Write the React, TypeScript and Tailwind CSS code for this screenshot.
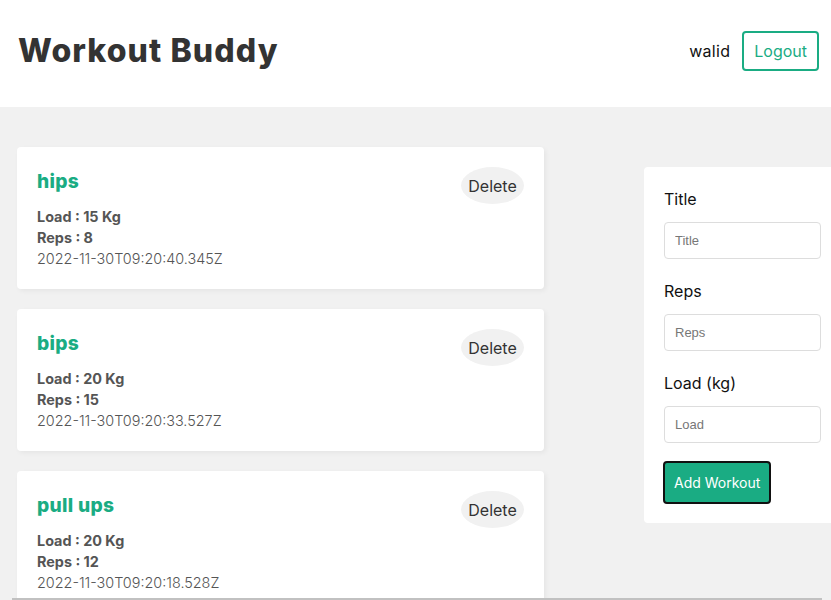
import React from 'react';

const workouts = [
  { title: 'hips', load: 15, reps: 8, createdAt: '2022-11-30T09:20:40.345Z' },
  { title: 'bips', load: 20, reps: 15, createdAt: '2022-11-30T09:20:33.527Z' },
  { title: 'pull ups', load: 20, reps: 12, createdAt: '2022-11-30T09:20:18.528Z' },
];

function WorkoutDetails({ workout }: { workout: (typeof workouts)[number] }) {
  return (
    <div className="relative mb-5 rounded bg-white p-5 shadow-[2px_2px_5px_rgba(0,0,0,0.05)]">
      <h4 className="mb-[10px] text-[19.2px] font-extrabold leading-[29px] tracking-[0.3px] text-[#1aac83]">
        {workout.title}
      </h4>
      <p className="text-[14.4px] leading-[21px] text-[#555]">
        <strong>Load : </strong>
        <strong>{workout.load} Kg</strong>
      </p>
      <p className="text-[14.4px] leading-[21px] text-[#555]">
        <strong>Reps : </strong>
        <strong>{workout.reps}</strong>
      </p>
      <p className="text-[14.4px] leading-[21px] font-light text-[#555]">{workout.createdAt}</p>
      <span className="absolute right-5 top-5 flex h-[37px] w-[63px] items-center justify-center rounded-[50%] bg-[#f1f1f1] text-[16px] text-[#333]">
        Delete
      </span>
    </div>
  );
}

function Field({ label, placeholder }: { label: string; placeholder: string }) {
  return (
    <label className="block">
      <span className="block text-[16px] leading-[25px] text-[#111]">{label}</span>
      <input
        className="mb-5 mt-[10px] block h-[37px] w-full rounded border border-[#ddd] px-[10px] font-['Liberation_Sans',Arial,sans-serif] text-[13px] placeholder:text-[#777] outline-none"
        placeholder={placeholder}
      />
    </label>
  );
}

export default function App() {
  return (
    <div className="relative h-screen overflow-hidden bg-[#f1f1f1] font-['Inter','Noto_Sans',sans-serif]">
      <header className="flex h-[107px] items-center justify-between bg-white pb-[6px] pl-[18px] pr-[12px]">
        <h1 className="text-[32px] font-extrabold tracking-[1.1px] text-[#333]">Workout Buddy</h1>
        <nav className="flex items-center gap-[12px]">
          <span className="text-[16px] tracking-[0.3px] text-[#111]">walid</span>
          <button className="h-[40px] rounded border-2 border-[#1aac83] px-[10px] text-[16px] text-[#1aac83]">
            Logout
          </button>
        </nav>
      </header>
      <div className="flex gap-[100px] pl-[17px] pt-[40px]">
        <div className="w-[527px] shrink-0">
          {workouts.map((w) => (
            <WorkoutDetails key={w.title} workout={w} />
          ))}
        </div>
        <form className="mt-[20px] h-[356px] w-[197px] shrink-0 self-start rounded bg-white px-5 pt-[20px]">
          <Field label="Title" placeholder="Title" />
          <Field label="Reps" placeholder="Reps" />
          <Field label="Load (kg)" placeholder="Load" />
          <button
            type="button"
            className="-ml-px -mt-[2px] h-[43px] rounded border-2 border-[#111] bg-[#1aac83] px-[9px] text-[14px] text-white"
          >
            Add Workout
          </button>
        </form>
      </div>
      <div className="absolute bottom-0 left-[12px] right-[9px] h-[2px] bg-[#c1c1c1]" />
    </div>
  );
}
